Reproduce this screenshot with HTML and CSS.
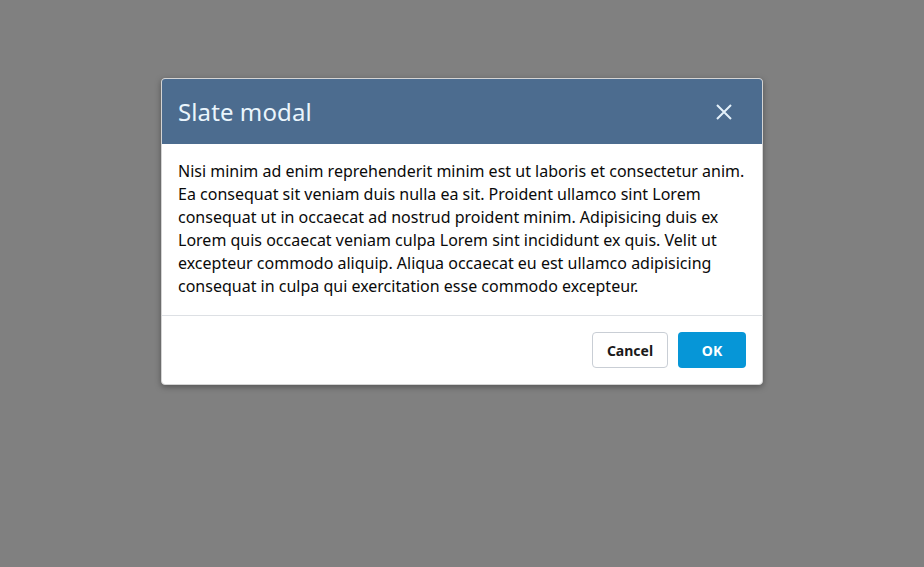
FILE: index.html
```html
<!DOCTYPE html>
<html lang="en">
<head>
<meta charset="utf-8">
<title>Slate modal</title>
<link rel="stylesheet" href="styles.css">
</head>
<body>
<div class="backdrop">
  <div class="modal" role="dialog" aria-labelledby="modal-title">
    <div class="modal-header">
      <h2 class="modal-title" id="modal-title">Slate modal</h2>
      <button class="close-btn" aria-label="Close">
        <svg width="24" height="24" viewBox="0 0 24 24" aria-hidden="true">
          <path d="M5 5 L19 19 M19 5 L5 19" stroke="currentColor" stroke-width="2" fill="none"/>
        </svg>
      </button>
    </div>
    <div class="modal-body">
      <p>Nisi minim ad enim reprehenderit minim est ut laboris et consectetur anim. Ea consequat sit veniam duis nulla ea sit. Proident ullamco sint Lorem consequat ut in occaecat ad nostrud proident minim. Adipisicing duis ex Lorem quis occaecat veniam culpa Lorem sint incididunt ex quis. Velit ut excepteur commodo aliquip. Aliqua occaecat eu est ullamco adipisicing consequat in culpa qui exercitation esse commodo excepteur.</p>
    </div>
    <div class="modal-footer">
      <button class="btn btn-secondary">Cancel</button>
      <button class="btn btn-primary">OK</button>
    </div>
  </div>
</div>
</body>
</html>
```
FILE: styles.css
```css
html, body {
  margin: 0;
  padding: 0;
  height: 100%;
}
body {
  background: #808080;
  font-family: "Noto Sans", "Open Sans", sans-serif;
}
.backdrop {
  display: flex;
  justify-content: center;
  padding-top: 78px;
}
.modal {
  width: 600px;
  background: #ffffff;
  border: 1px solid #d4d4d4;
  border-radius: 4px;
  box-shadow: 0 2px 6px rgba(0, 0, 0, 0.35);
  overflow: hidden;
}
.modal-header {
  height: 65px;
  background: #4c6c8f;
  display: flex;
  align-items: center;
  justify-content: space-between;
  padding: 0 16px;
  box-sizing: border-box;
}
.modal-title {
  margin: 0;
  font-size: 24px;
  font-weight: 400;
  color: #eaf5fc;
  letter-spacing: 0.1px;
}
.close-btn {
  background: none;
  border: 0;
  padding: 0;
  width: 24px;
  height: 24px;
  display: flex;
  align-items: center;
  justify-content: center;
  color: #e4f1fa;
  margin-right: 10px;
}
.modal-body {
  padding: 16px 16px 17px;
  border-bottom: 1px solid #dde0e4;
}
.modal-body p {
  margin: 0;
  font-size: 16px;
  line-height: 23px;
  color: #0a0a0a;
}
.modal-footer {
  display: flex;
  justify-content: flex-end;
  gap: 10px;
  padding: 16px;
}
.btn {
  height: 36px;
  border-radius: 4px;
  font-family: "Noto Sans", "Open Sans", sans-serif;
  font-size: 14px;
  font-weight: 700;
  padding: 0;
  box-sizing: border-box;
}
.btn-secondary {
  width: 76px;
  background: #ffffff;
  border: 1px solid #c9ced5;
  color: #1a1a1a;
}
.btn-primary {
  width: 68px;
  background: #0696d7;
  border: 0;
  color: #ffffff;
}
```
